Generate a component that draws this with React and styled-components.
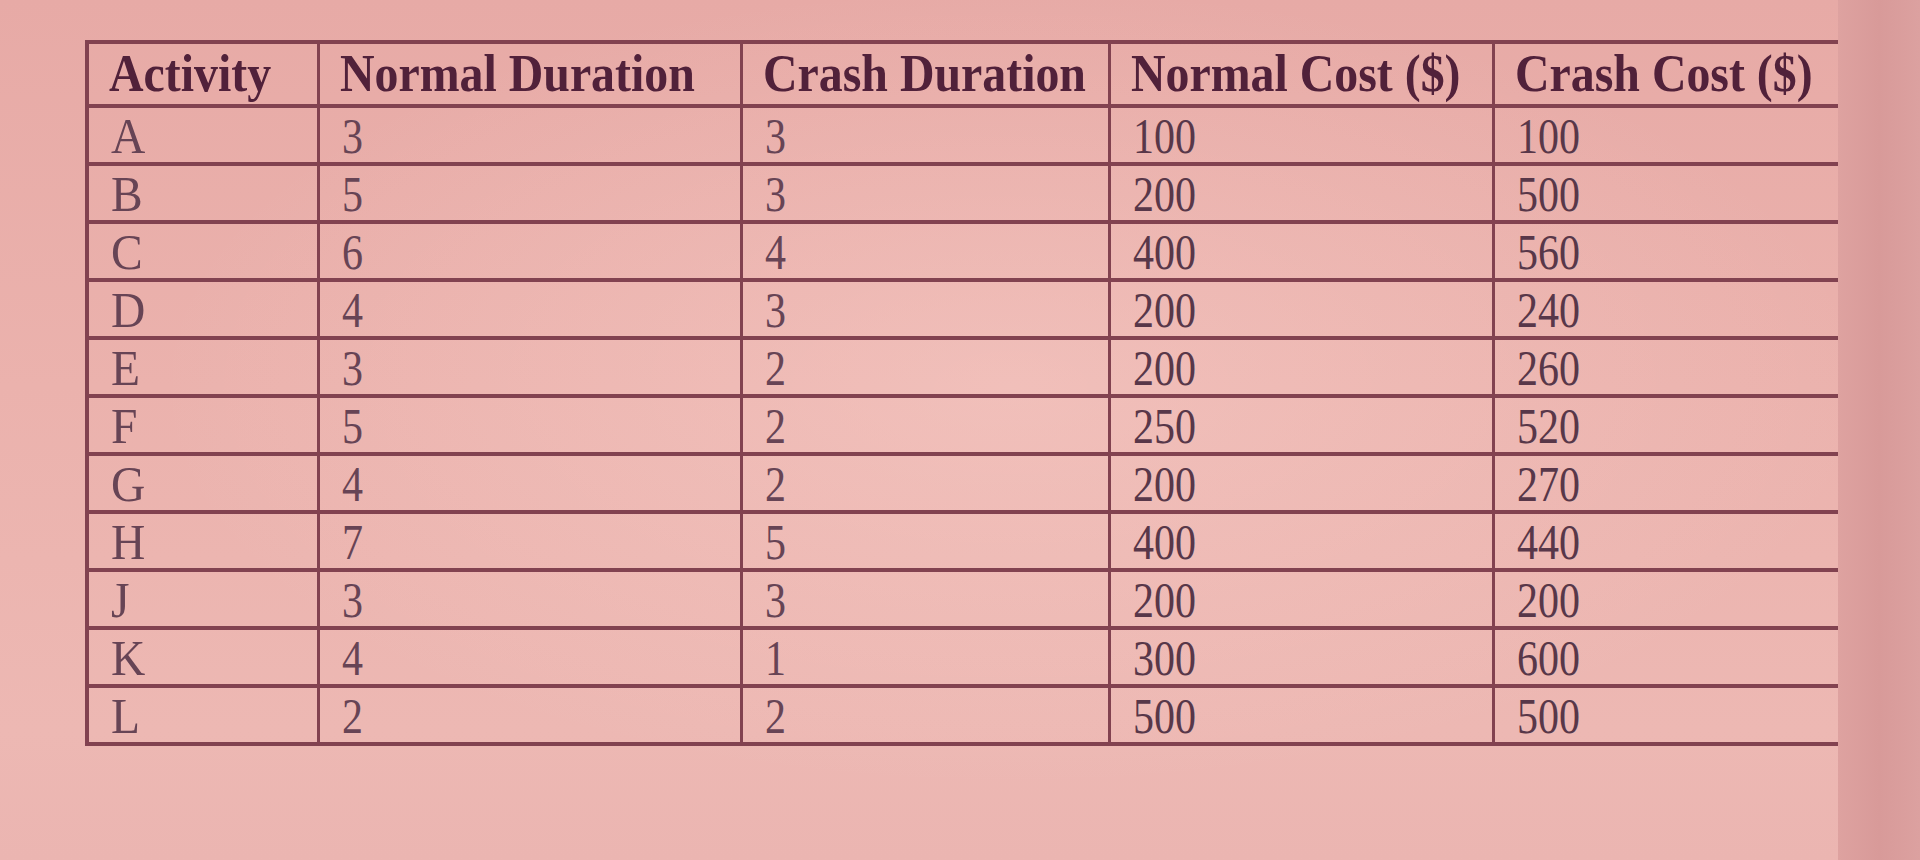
import React from "react";
import styled, { createGlobalStyle } from "styled-components";

const GlobalStyle = createGlobalStyle`
  html, body {
    margin: 0;
    padding: 0;
    background: #e4a9a6;
  }
  #root {
    height: 860px;
    overflow: hidden;
  }
`;

const Page = styled.div`
  display: flex;
  width: 1920px;
  height: 860px;
  overflow: hidden;
`;

const Screen = styled.div`
  width: 1838px;
  flex: none;
  box-sizing: border-box;
  padding: 40px 0 0 85px;
  background:
    radial-gradient(ellipse at 55% 45%, rgba(255, 222, 216, 0.3), rgba(255, 222, 216, 0) 60%),
    linear-gradient(180deg, #e7aaa6 0%, #ebb2ad 45%, #edb8b3 85%, #ebb5b1 100%);
`;

const Bezel = styled.div`
  flex: 1;
  background: linear-gradient(90deg, #dea2a0 0%, #d89a99 50%, #dca1a0 100%);
`;

const Table = styled.table`
  width: 1753px;
  border-collapse: collapse;
  table-layout: fixed;
  border-top: 4px solid #824250;
  border-left: 4px solid #824250;
  border-bottom: 4px solid #824250;
`;

const Col = styled.col`
  width: ${(p) => p.$w}px;
`;

const HeadCell = styled.th`
  height: 60px;
  padding: 0 0 0 20px;
  text-align: left;
  vertical-align: middle;
  font-family: "Liberation Serif", "Times New Roman", serif;
  font-weight: 700;
  font-size: 52px;
  line-height: 1;
  color: #51213a;
  white-space: nowrap;
  border-bottom: 4px solid #824250;
  border-left: 3px solid #824250;
  &:first-child {
    border-left: none;
  }
`;

const Cell = styled.td`
  height: 52px;
  padding: 2px 0 0 22px;
  text-align: left;
  vertical-align: middle;
  font-family: "Liberation Serif", "Times New Roman", serif;
  font-weight: 400;
  font-size: 50px;
  line-height: 1;
  color: ${(p) => (p.$dark ? "#583749" : "#674455")};
  white-space: nowrap;
  border-bottom: 4px solid #824250;
  border-left: 3px solid #824250;
  &:first-child {
    border-left: none;
  }
`;

const Narrow = styled.span`
  display: inline-block;
  transform: scaleX(${(p) => p.$sx});
  transform-origin: left center;
`;

const columns = [
  { title: "Activity", w: 231 },
  { title: "Normal Duration", w: 423 },
  { title: "Crash Duration", w: 368 },
  { title: "Normal Cost ($)", w: 384 },
  { title: "Crash Cost ($)", w: 347 },
];

const rows = [
  ["A", "3", "3", "100", "100"],
  ["B", "5", "3", "200", "500"],
  ["C", "6", "4", "400", "560"],
  ["D", "4", "3", "200", "240"],
  ["E", "3", "2", "200", "260"],
  ["F", "5", "2", "250", "520"],
  ["G", "4", "2", "200", "270"],
  ["H", "7", "5", "400", "440"],
  ["J", "3", "3", "200", "200"],
  ["K", "4", "1", "300", "600"],
  ["L", "2", "2", "500", "500"],
];

export default function App() {
  return (
    <>
      <GlobalStyle />
      <Page>
        <Screen>
          <Table>
            <colgroup>
              {columns.map((c) => (
                <Col key={c.title} $w={c.w} />
              ))}
            </colgroup>
            <thead>
              <tr>
                {columns.map((c) => (
                  <HeadCell key={c.title}>
                    <Narrow $sx={0.92}>{c.title}</Narrow>
                  </HeadCell>
                ))}
              </tr>
            </thead>
            <tbody>
              {rows.map((r) => (
                <tr key={r[0]}>
                  {r.map((v, i) => (
                    <Cell key={i} $dark={i >= 3}>
                      <Narrow $sx={i === 0 ? 0.95 : 0.84}>{v}</Narrow>
                    </Cell>
                  ))}
                </tr>
              ))}
            </tbody>
          </Table>
        </Screen>
        <Bezel />
      </Page>
    </>
  );
}
